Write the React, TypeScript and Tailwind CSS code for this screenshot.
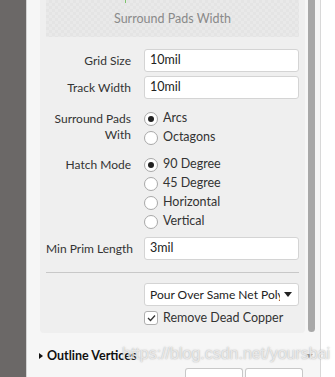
import React from 'react';

const font = { fontFamily: 'Lato, "Noto Sans", sans-serif' };

const Radio: React.FC<{ label: string; checked?: boolean }> = ({ label, checked }) => (
  <div className="flex items-center h-[19px]">
    <span className="w-[14px] h-[14px] rounded-full border border-[#a8a8a8] bg-white flex items-center justify-center shrink-0">
      {checked && <span className="w-[6px] h-[6px] rounded-full bg-[#222]" />}
    </span>
    <span className="ml-[5px] text-[12.5px] text-[#333]">{label}</span>
  </div>
);

const Row: React.FC<{ label: React.ReactNode; children: React.ReactNode; className?: string }> = ({ label, children, className }) => (
  <div className={`flex ${className ?? ''}`}>
    <div className="w-[98px] pr-[13px] text-right text-[12px] text-[#333] leading-[16px] shrink-0 whitespace-nowrap">{label}</div>
    <div className="flex-1 min-w-0">{children}</div>
  </div>
);

const Input: React.FC<{ value: string }> = ({ value }) => (
  <div className="h-[23px] bg-white border border-[#d4d4d4] rounded-[3px] px-[5px] flex items-center text-[12.5px] text-[#222]">
    {value}
  </div>
);

export default function App() {
  return (
    <div className="w-[335px] h-[377px] flex overflow-hidden bg-[#f6f6f6] relative" style={font}>
      <div className="w-[26px] bg-[#6b6867] shrink-0" />
      <div className="w-px bg-[#d2d2d2] shrink-0" />
      <div className="w-[293px] shrink-0 flex flex-col">
        <div className="flex">
          <div className="ml-[13px] w-[265px] h-[333px] bg-[#efefef] rounded-b-[4px] px-[6px] flex flex-col">
            <div
              className="h-[37px] shrink-0 flex flex-col items-center justify-end pb-[8px] relative"
              style={{
                backgroundColor: '#e9e9e9',
                backgroundImage:
                  'linear-gradient(45deg, #e4e4e4 25%, transparent 25%, transparent 75%, #e4e4e4 75%), linear-gradient(45deg, #e4e4e4 25%, transparent 25%, transparent 75%, #e4e4e4 75%)',
                backgroundSize: '6px 6px',
                backgroundPosition: '0 0, 3px 3px',
              }}
            >
              <span className="absolute left-[79px] top-0 w-px h-[3px] bg-[#7cc26b]" />
              <span className="text-[12.5px] text-[#8a8a8a]">Surround Pads Width</span>
            </div>
            <div className="mt-[12px] flex flex-col">
              <Row label={<span className="leading-[23px]">Grid Size</span>}>
                <Input value="10mil" />
              </Row>
              <Row label={<span className="leading-[23px]">Track Width</span>} className="mt-[4px]">
                <Input value="10mil" />
              </Row>
              <Row label={<div className="pt-[2px]">Surround Pads<br />With</div>} className="mt-[10px]">
                <Radio label="Arcs" checked />
                <Radio label="Octagons" />
              </Row>
              <Row label={<span className="leading-[19px]">Hatch Mode</span>} className="mt-[8px]">
                <Radio label="90 Degree" checked />
                <Radio label="45 Degree" />
                <Radio label="Horizontal" />
                <Radio label="Vertical" />
              </Row>
              <Row label={<span className="leading-[23px]">Min Prim Length</span>} className="mt-[6px]">
                <Input value="3mil" />
              </Row>
              <div className="mt-[12px] h-px bg-[#c8c8c8]" />
              <Row label="" className="mt-[10px]">
                <div className="h-[23px] bg-white border border-[#d4d4d4] rounded-[3px] pl-[5px] pr-[6px] flex items-center text-[12px] text-[#222]">
                  <span className="flex-1 min-w-0 overflow-hidden whitespace-nowrap">Pour Over Same Net Polygons Only</span>
                  <span className="ml-[4px] shrink-0 w-0 h-0 border-l-[4px] border-r-[4px] border-t-[5px] border-l-transparent border-r-transparent border-t-[#222]" />
                </div>
                <div className="mt-[3px] flex items-center">
                  <span className="w-[14px] h-[14px] rounded-[3px] border border-[#b0b0b0] bg-white flex items-center justify-center">
                    <svg width="9" height="8" viewBox="0 0 9 8">
                      <path d="M1 4 L3.5 6.5 L8 1.5" fill="none" stroke="#333" strokeWidth="1.3" />
                    </svg>
                  </span>
                  <span className="ml-[5px] text-[12.5px] text-[#333]">Remove Dead Copper</span>
                </div>
              </Row>
            </div>
          </div>
          <div className="ml-[3px] w-[7px] h-[332px] bg-[#a8a8a8] rounded-b-[4px]" />
        </div>
        <div className="flex items-center mt-[14px] ml-[12px]">
          <span className="w-0 h-0 border-t-[3.5px] border-b-[3.5px] border-l-[4px] border-t-transparent border-b-transparent border-l-[#111]" />
          <span className="ml-[4px] text-[12.5px] font-bold text-[#111]">Outline Vertices</span>
          <span className="ml-auto mr-[7px] w-0 h-0 border-l-[4px] border-r-[4px] border-t-[4px] border-l-transparent border-r-transparent border-t-[#999]" />
        </div>
        <div className="flex mt-auto ml-[158px] gap-[2px]">
          <div className="w-[58px] h-[9px] bg-white border border-b-0 border-[#c8c8c8] rounded-t-[3px]" />
          <div className="w-[58px] h-[9px] bg-white border border-b-0 border-[#c8c8c8] rounded-t-[3px]" />
        </div>
      </div>
      <div className="w-px bg-[#d8d8d8] shrink-0" />
      <div className="flex-1 bg-white" />
      <div
        className="absolute left-[122px] top-[345px] text-[16px] leading-[18px] text-[#f4f4f4]/80 whitespace-nowrap pointer-events-none"
        style={{ fontFamily: '"Liberation Sans", Arial, sans-serif', textShadow: '0 0 1.5px rgba(140,140,140,0.8)' }}
      >
        https://blog.csdn.net/yoursbai
      </div>
    </div>
  );
}
